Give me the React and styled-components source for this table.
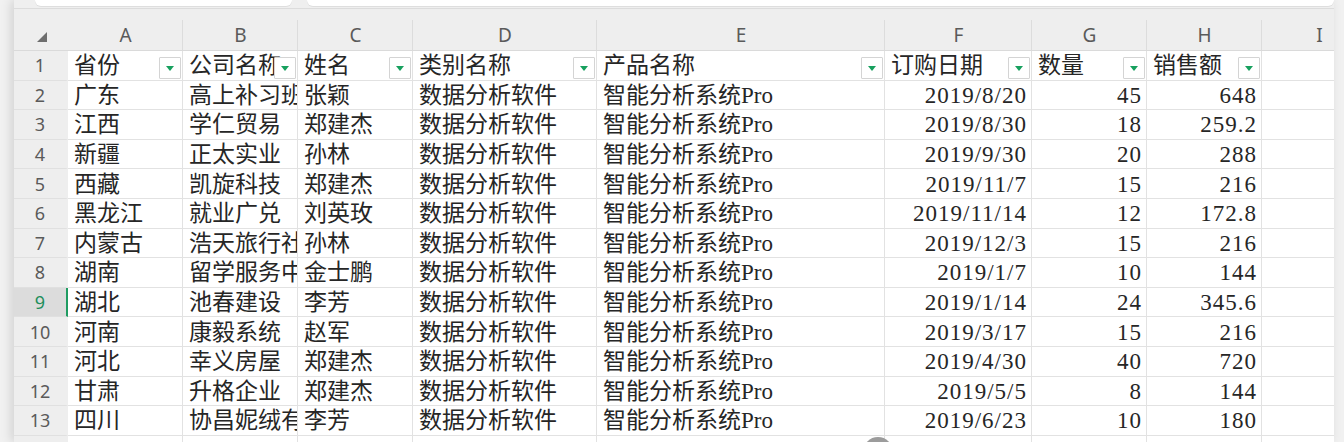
import React from 'react';
import styled, { createGlobalStyle } from 'styled-components';

const GlobalStyle = createGlobalStyle`
  html, body {
    margin: 0;
    padding: 0;
    background: #f1f1f1;
  }
`;

const COLUMNS = [
  { key: 'A', width: 115 },
  { key: 'B', width: 115 },
  { key: 'C', width: 115 },
  { key: 'D', width: 184 },
  { key: 'E', width: 288 },
  { key: 'F', width: 147 },
  { key: 'G', width: 115 },
  { key: 'H', width: 115 },
  { key: 'I', width: 115 },
];

const HEADERS = ['省份', '公司名称', '姓名', '类别名称', '产品名称', '订购日期', '数量', '销售额'];

const ROWS = [
  ['广东', '高上补习班', '张颖', '2019/8/20', '45', '648'],
  ['江西', '学仁贸易', '郑建杰', '2019/8/30', '18', '259.2'],
  ['新疆', '正太实业', '孙林', '2019/9/30', '20', '288'],
  ['西藏', '凯旋科技', '郑建杰', '2019/11/7', '15', '216'],
  ['黑龙江', '就业广兑', '刘英玫', '2019/11/14', '12', '172.8'],
  ['内蒙古', '浩天旅行社', '孙林', '2019/12/3', '15', '216'],
  ['湖南', '留学服务中心', '金士鹏', '2019/1/7', '10', '144'],
  ['湖北', '池春建设', '李芳', '2019/1/14', '24', '345.6'],
  ['河南', '康毅系统', '赵军', '2019/3/17', '15', '216'],
  ['河北', '幸义房屋', '郑建杰', '2019/4/30', '40', '720'],
  ['甘肃', '升格企业', '郑建杰', '2019/5/5', '8', '144'],
  ['四川', '协昌妮绒有限公司', '李芳', '2019/6/23', '10', '180'],
];

const ACTIVE_ROW = 9;

const Page = styled.div`
  height: 442px;
  padding-left: 14px;
  overflow: hidden;
`;

const Window = styled.div`
  position: relative;
  width: 1320px;
  height: 442px;
  background: #ffffff;
  overflow: hidden;
  box-shadow: -3px 0 10px rgba(0, 0, 0, 0.13);
`;

const TopStrip = styled.div`
  display: flex;
  gap: 15px;
  height: 8px;
  padding-left: 21px;
  background: #efefef;
  border-bottom: 1px solid #dcdcdc;
`;

const InputBar = styled.div`
  width: ${props => props.width}px;
  flex: ${props => (props.grow ? 1 : 'none')};
  height: 6px;
  background: #ffffff;
  border-radius: 0 0 8px 8px;
  box-shadow: 0 1px 0 #dedede;
`;

const Sheet = styled.div`
  display: grid;
  grid-template-columns: 54px ${COLUMNS.map(c => `${c.width}px`).join(' ')};
  grid-template-rows: 42px repeat(14, 29.6px);
`;

const Corner = styled.div`
  position: relative;
  background: #eeeeee;
  border-bottom: 1px solid #dadada;
  &::after {
    content: '';
    position: absolute;
    left: 23px;
    top: 23px;
    width: 10px;
    height: 10px;
    background: #6e6e6e;
    clip-path: polygon(100% 0, 100% 100%, 0 100%);
  }
`;

const ColHead = styled.div`
  position: relative;
  display: flex;
  align-items: center;
  justify-content: center;
  padding-top: 11px;
  background: #eeeeee;
  border-bottom: 1px solid #dadada;
  color: #5a5a5a;
  font-family: 'Noto Sans', 'Liberation Sans', sans-serif;
  font-size: 19px;
  &::after {
    content: '';
    position: absolute;
    right: 0;
    top: 11px;
    bottom: 0;
    width: 1px;
    background: #dcdcdc;
  }
`;

const RowHead = styled.div`
  display: flex;
  align-items: center;
  justify-content: center;
  background: ${props => (props.active ? '#dcdcdc' : '#eeeeee')};
  border-bottom: 1px solid #e0e0e0;
  border-right: 2px solid ${props => (props.active ? '#1f9c62' : 'transparent')};
  color: ${props => (props.active ? '#1f8f5c' : '#5a5a5a')};
  font-family: 'Noto Sans', 'Liberation Sans', sans-serif;
  font-size: 18px;
`;

const Cell = styled.div`
  position: relative;
  display: flex;
  align-items: center;
  justify-content: ${props => (props.right ? 'flex-end' : 'flex-start')};
  padding: ${props => (props.right ? '1px 4px 0 0' : '1px 0 0 6px')};
  background: #ffffff;
  border-right: 1px solid #e2e2e2;
  border-bottom: 1px solid #e2e2e2;
  overflow: hidden;
  white-space: nowrap;
  color: #262626;
  font-family: 'Liberation Serif', 'Noto Sans CJK SC', serif;
  font-size: 23px;
  line-height: 1;
  letter-spacing: ${props => (props.right ? '1px' : '0')};
`;

const FilterButton = styled.span`
  position: absolute;
  right: 1px;
  bottom: 1px;
  width: 22px;
  height: 22px;
  box-sizing: border-box;
  background: #ffffff;
  border: 1px solid #d4d4d4;
  border-radius: 1px;
  &::after {
    content: '';
    position: absolute;
    left: 6px;
    top: 8px;
    border-left: 4.5px solid transparent;
    border-right: 4.5px solid transparent;
    border-top: 5px solid #17a05e;
  }
`;

const FloatDot = styled.div`
  position: absolute;
  left: 849px;
  top: 437px;
  width: 30px;
  height: 30px;
  border-radius: 50%;
  background: #9c9c9c;
`;

function rowValues(r) {
  return [r[0], r[1], r[2], '数据分析软件', '智能分析系统Pro', r[3], r[4], r[5], ''];
}

const RIGHT_COLS = [5, 6, 7];

export default function App() {
  return (
    <>
      <GlobalStyle />
      <Page>
        <Window>
          <TopStrip>
            <InputBar width={257} />
            <InputBar grow />
          </TopStrip>
          <Sheet>
            <Corner />
            {COLUMNS.map(c => (
              <ColHead key={c.key}>{c.key}</ColHead>
            ))}

            <RowHead>1</RowHead>
            {HEADERS.map(h => (
              <Cell key={h}>
                {h}
                <FilterButton />
              </Cell>
            ))}
            <Cell />

            {ROWS.map((r, i) => {
              const n = i + 2;
              return (
                <React.Fragment key={n}>
                  <RowHead active={n === ACTIVE_ROW}>{n}</RowHead>
                  {rowValues(r).map((v, j) => (
                    <Cell key={j} right={RIGHT_COLS.includes(j)}>
                      {v}
                    </Cell>
                  ))}
                </React.Fragment>
              );
            })}

            <RowHead>14</RowHead>
            {COLUMNS.map(c => (
              <Cell key={c.key} />
            ))}
          </Sheet>
          <FloatDot />
        </Window>
      </Page>
    </>
  );
}
